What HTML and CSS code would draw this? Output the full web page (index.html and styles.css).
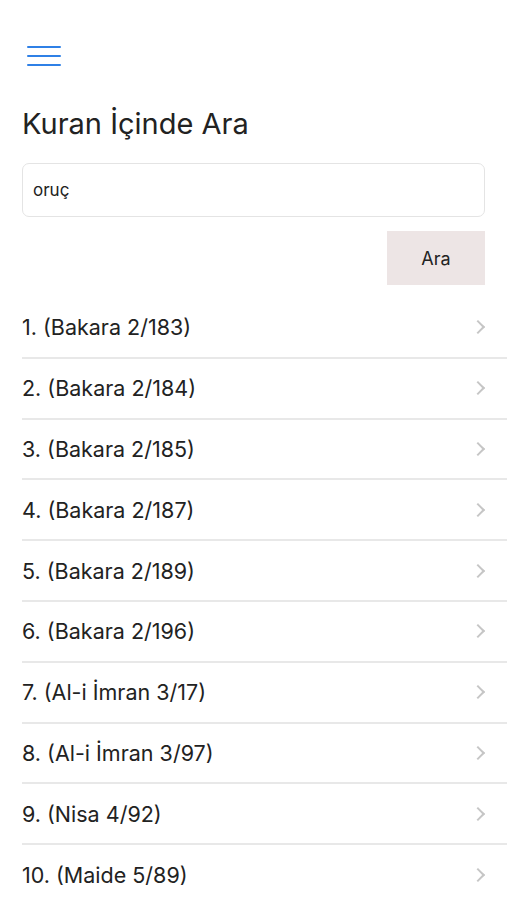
FILE: index.html
```html
<!DOCTYPE html>
<html>

<head>
    <meta charset="UTF-8">
    <meta name="viewport" content="width=device-width, initial-scale=1.0">
    <title>Kuran İçinde Ara</title>
    <link rel="stylesheet" href="styles.css">
</head>

<body>
    <div class="page">
        <button class="menu-btn" aria-label="Menü">
            <span></span><span></span><span></span>
        </button>
        <h1>Kuran İçinde Ara</h1>
        <form class="search-form">
            <input type="text" class="search-input" value="oruç" />
            <div class="actions">
                <button type="submit" class="search-btn">Ara</button>
            </div>
        </form>
        <ul class="results">
            <li><span>1. (Bakara 2/183)</span><i class="chevron"></i></li>
            <li><span>2. (Bakara 2/184)</span><i class="chevron"></i></li>
            <li><span>3. (Bakara 2/185)</span><i class="chevron"></i></li>
            <li><span>4. (Bakara 2/187)</span><i class="chevron"></i></li>
            <li><span>5. (Bakara 2/189)</span><i class="chevron"></i></li>
            <li><span>6. (Bakara 2/196)</span><i class="chevron"></i></li>
            <li><span>7. (Al-i İmran 3/17)</span><i class="chevron"></i></li>
            <li><span>8. (Al-i İmran 3/97)</span><i class="chevron"></i></li>
            <li><span>9. (Nisa 4/92)</span><i class="chevron"></i></li>
            <li><span>10. (Maide 5/89)</span><i class="chevron"></i></li>
        </ul>
    </div>
</body>

</html>
```

FILE: styles.css
```css
/* Reset styles */
* {
    margin: 0;
    padding: 0;
    box-sizing: border-box;
}

body {
    font-family: Inter, "Noto Sans", sans-serif;
    background-color: #fff;
    color: #1c1c1c;
}

.page {
    padding: 44px 0 0 22px;
}

/* Hamburger */
.menu-btn {
    display: flex;
    flex-direction: column;
    gap: 7px;
    width: 34px;
    padding: 2px 0;
    margin-left: 5px;
    background: none;
    border: none;
    cursor: pointer;
}

.menu-btn span {
    display: block;
    height: 2px;
    background-color: #2f80e6;
    border-radius: 1px;
}

h1 {
    font-size: 29px;
    font-weight: 400;
    margin-top: 38px;
    color: #222;
}

.search-form {
    margin-top: 22px;
    padding-right: 22px;
}

.search-input {
    width: 100%;
    height: 54px;
    padding: 0 10px;
    border: 1px solid #e4e4e4;
    border-radius: 7px;
    font-family: inherit;
    font-size: 17px;
    color: #222;
    outline: none;
}

.actions {
    display: flex;
    justify-content: flex-end;
    margin-top: 14px;
}

.search-btn {
    width: 98px;
    height: 54px;
    background-color: #ede5e5;
    border: none;
    font-family: inherit;
    font-size: 18px;
    color: #222;
    cursor: pointer;
}

.results {
    list-style: none;
    margin-top: 13px;
}

.results li {
    display: flex;
    align-items: center;
    justify-content: space-between;
    height: 60.8px;
    padding-right: 24px;
    border-bottom: 2px solid #e8e8e8;
    font-size: 21.5px;
    color: #222;
}

.chevron {
    width: 10px;
    height: 10px;
    border-top: 2px solid #c6c6c6;
    border-right: 2px solid #c6c6c6;
    transform: rotate(45deg);
}
```
